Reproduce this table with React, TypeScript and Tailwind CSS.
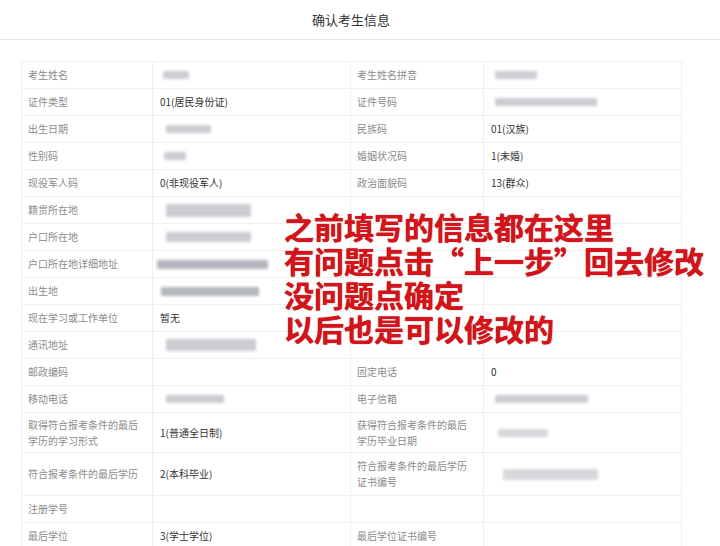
import React from "react";

type Blur = { cls: string };
type Cell = string | Blur[] | null;
type Row = { l1: string; v1: Cell; l2: string; v2: Cell; h: string };

const light = "bg-[#cbcdd2]";
const dark = "bg-[#b4b6bd]";

const rows: Row[] = [
  { l1: "考生姓名", v1: [{ cls: `ml-[3px] w-[26px] h-[8px] ${light}` }], l2: "考生姓名拼音", v2: [{ cls: `ml-[4px] w-[42px] h-[8px] ${light}` }], h: "h-[27px]" },
  { l1: "证件类型", v1: "01(居民身份证)", l2: "证件号码", v2: [{ cls: `ml-[4px] w-[102px] h-[8px] ${light}` }], h: "h-[27px]" },
  { l1: "出生日期", v1: [{ cls: `ml-[6px] w-[45px] h-[8px] ${light}` }], l2: "民族码", v2: "01(汉族)", h: "h-[27px]" },
  { l1: "性别码", v1: [{ cls: `ml-[4px] w-[22px] h-[8px] ${light}` }], l2: "婚姻状况码", v2: "1(未婚)", h: "h-[27px]" },
  { l1: "现役军人码", v1: "0(非现役军人)", l2: "政治面貌码", v2: "13(群众)", h: "h-[27px]" },
  { l1: "籍贯所在地", v1: [{ cls: `ml-[6px] w-[85px] h-[13px] ${light}` }], l2: "", v2: null, h: "h-[27px]" },
  { l1: "户口所在地", v1: [{ cls: `ml-[6px] w-[85px] h-[10px] ${light}` }], l2: "", v2: null, h: "h-[27px]" },
  { l1: "户口所在地详细地址", v1: [{ cls: `-ml-[3px] w-[111px] h-[9px] ${dark}` }], l2: "", v2: null, h: "h-[27px]" },
  { l1: "出生地", v1: [{ cls: `ml-[1px] w-[98px] h-[9px] ${dark}` }], l2: "", v2: null, h: "h-[27px]" },
  { l1: "现在学习或工作单位", v1: "暂无", l2: "", v2: null, h: "h-[27px]" },
  { l1: "通讯地址", v1: [{ cls: `ml-[6px] w-[90px] h-[12px] ${light}` }], l2: "", v2: null, h: "h-[27px]" },
  { l1: "邮政编码", v1: null, l2: "固定电话", v2: "0", h: "h-[27px]" },
  { l1: "移动电话", v1: [{ cls: `ml-[6px] w-[58px] h-[8px] ${light}` }], l2: "电子信箱", v2: [{ cls: `ml-[4px] w-[93px] h-[8px] ${light}` }], h: "h-[27px]" },
  { l1: "取得符合报考条件的最后\n学历的学习形式", v1: "1(普通全日制)", l2: "获得符合报考条件的最后\n学历毕业日期", v2: [{ cls: `ml-[7px] w-[50px] h-[8px] bg-[#d6d8dc]` }], h: "h-[40px]" },
  { l1: "符合报考条件的最后学历", v1: "2(本科毕业)", l2: "符合报考条件的最后学历\n证书编号", v2: [{ cls: `ml-[12px] w-[95px] h-[11px] bg-[#d6d8dc]` }], h: "h-[43px]" },
  { l1: "注册学号", v1: null, l2: "", v2: null, h: "h-[27px]" },
  { l1: "最后学位", v1: "3(学士学位)", l2: "最后学位证书编号", v2: null, h: "h-[27px]" },
];

function Label({ text, h }: { text: string; h: string }) {
  return (
    <div
      className={
        "flex items-center border-b border-r border-[#efefef] pl-[6px] text-[10px] leading-[16px] text-[#8c8c8c] whitespace-pre " +
        h
      }
    >
      {text}
    </div>
  );
}

function Value({ v, h, last }: { v: Cell; h: string; last?: boolean }) {
  return (
    <div
      className={
        "flex items-center border-b border-[#efefef] pl-[7px] text-[10px] leading-[16px] text-[#333333] " +
        (last ? "" : "border-r ") +
        h
      }
    >
      {typeof v === "string"
        ? v
        : v
        ? v.map((b, i) => <div key={i} className={"rounded-[1px] blur-[1.5px] " + b.cls} />)
        : null}
    </div>
  );
}

export default function App() {
  return (
    <div className="relative h-[546px] w-[720px] overflow-hidden bg-white font-['Noto_Sans_CJK_SC','Noto_Sans',sans-serif]">
      <div className="flex h-[40px] items-center justify-center border-b border-[#e6e6e6] pr-[18px] text-[13px] text-[#333333]">
        确认考生信息
      </div>
      <div className="ml-[21px] mt-[21px] w-[661px] border-l border-r border-t border-[#efefef]">
        <div className="grid grid-cols-[131px_198px_133px_197px]">
          {rows.map((r, i) => (
            <React.Fragment key={i}>
              <Label text={r.l1} h={r.h} />
              <Value v={r.v1} h={r.h} />
              <Label text={r.l2} h={r.h} />
              <Value v={r.v2} h={r.h} last />
            </React.Fragment>
          ))}
        </div>
      </div>
      <div className="absolute left-[284px] top-[209px] flex flex-col text-[30px] font-bold leading-[34px] text-[#d6121a] [text-shadow:0_0_1px_#8a0000]">
        <div>之前填写的信息都在这里</div>
        <div>有问题点击“上一步”回去修改</div>
        <div>没问题点确定</div>
        <div>以后也是可以修改的</div>
      </div>
    </div>
  );
}
